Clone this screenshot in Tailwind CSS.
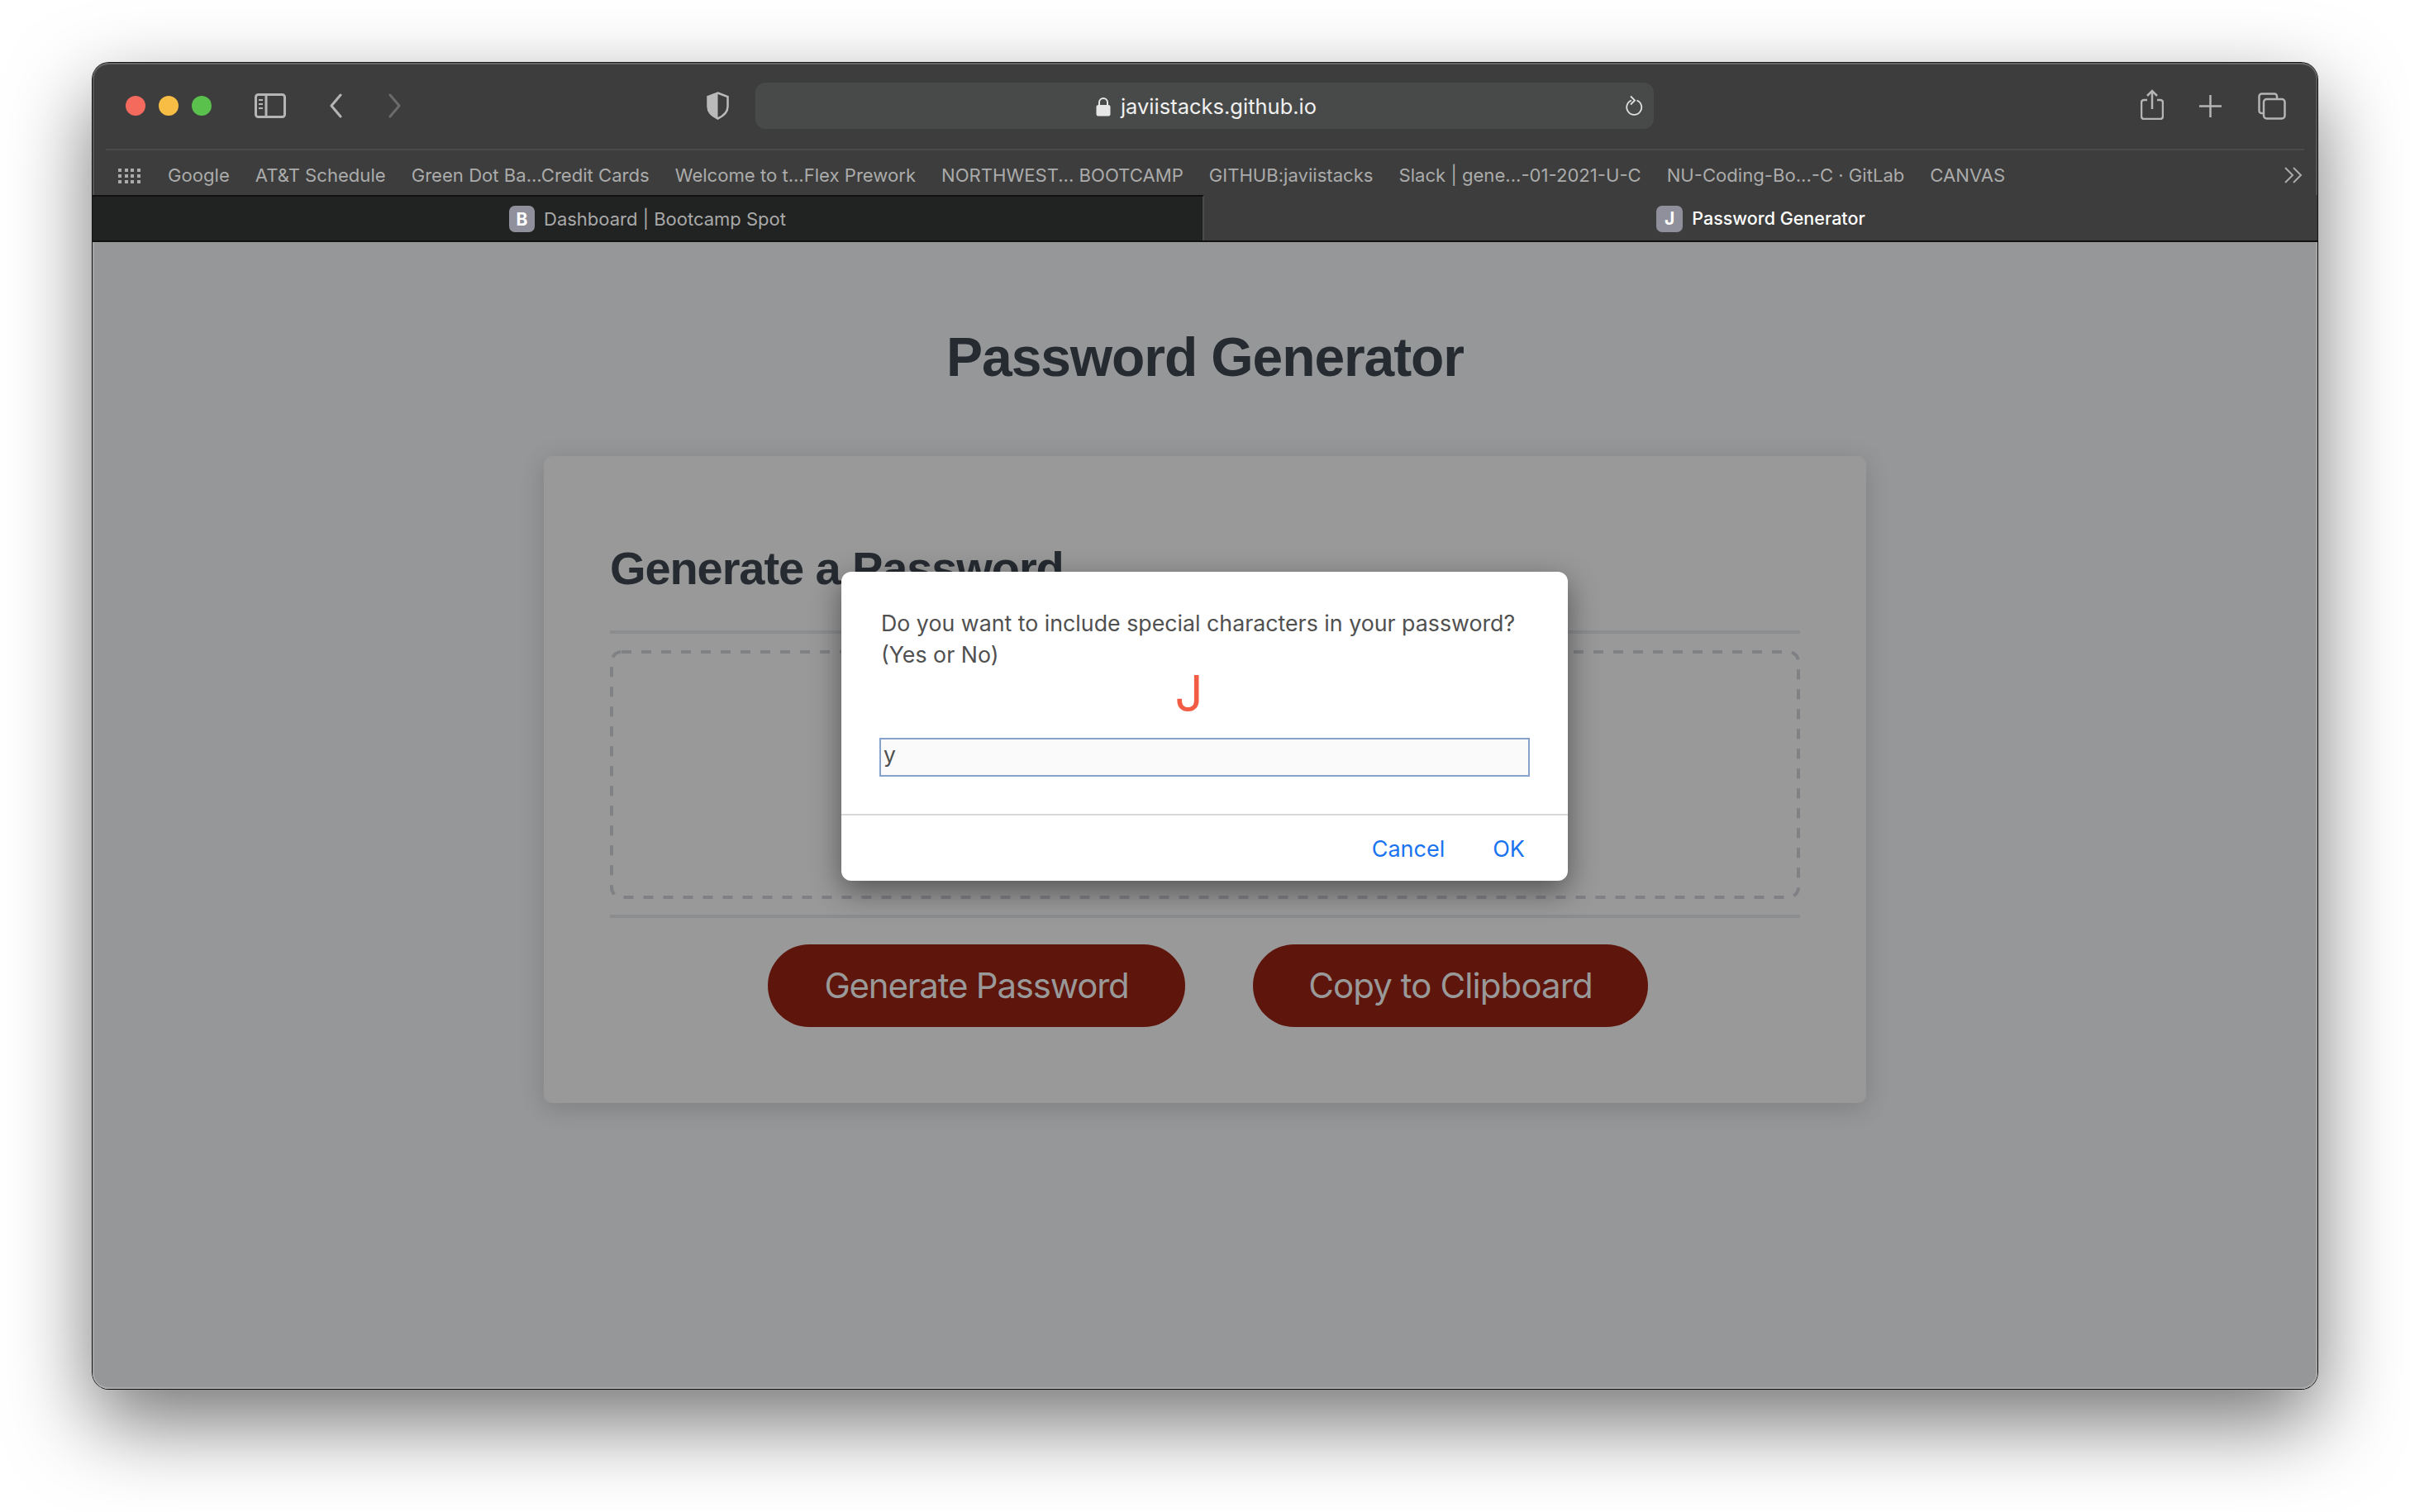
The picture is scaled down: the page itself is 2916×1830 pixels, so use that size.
<!DOCTYPE html>
<html lang="en">
<head>
  <meta charset="UTF-8">
  <title>Password Generator</title>
  <script src="https://cdn.jsdelivr.net/npm/@tailwindcss/browser@4"></script>
</head>
<body class="bg-white w-[2916px] h-[1830px] overflow-hidden pl-[112px] pt-[76px] font-['Inter',sans-serif]">

  <!-- Browser window -->
  <div class="relative w-[2692px] h-[1605px] rounded-[20px] overflow-visible flex flex-col shadow-[0_40px_100px_rgba(0,0,0,0.55),0_0_0_1px_#1a1a1a]">

    <!-- Toolbar -->
    <div class="h-[104px] shrink-0 flex items-center pl-[40px] bg-[#3c3d3c] rounded-t-[20px] shadow-[inset_0_2px_0_#666,inset_2px_0_0_#555,inset_-2px_0_0_#555]">
      <div class="flex gap-4">
        <span class="w-6 h-6 rounded-full bg-[#f46b5d]"></span>
        <span class="w-6 h-6 rounded-full bg-[#f7bd45]"></span>
        <span class="w-6 h-6 rounded-full bg-[#5ac24c]"></span>
      </div>
      <svg class="ml-[52px]" width="38" height="30" viewBox="0 0 38 30" fill="none" stroke="#b4b5b4" stroke-width="3">
        <rect x="1.5" y="1.5" width="35" height="27" rx="3"/>
        <path d="M14 2v26"/>
        <path d="M5 8h5M5 13h5M5 18h5" stroke-width="2"/>
      </svg>
      <svg class="ml-[52px]" width="16" height="30" viewBox="0 0 16 30" fill="none" stroke="#b4b5b4" stroke-width="3" stroke-linecap="round" stroke-linejoin="round">
        <path d="M14 2 3 15l11 13"/>
      </svg>
      <svg class="ml-[55px]" width="17" height="30" viewBox="0 0 17 30" fill="none" stroke="#6a6b6a" stroke-width="3" stroke-linecap="round" stroke-linejoin="round">
        <path d="M3 2l11 13L3 28"/>
      </svg>
      <svg class="ml-[369px]" width="27" height="34" viewBox="0 0 27 34">
        <path d="M13.5 1.5 25.5 6v12c0 7-5.500 11.500-12 14.500C7 29.500 1.500 25 1.500 18V6z" fill="none" stroke="#b9bab9" stroke-width="2.500"/>
        <path d="M13.500 1.500 1.500 6v12c0 7 5.500 11.500 12 14.500z" fill="#b9bab9"/>
      </svg>
      <!-- Address bar -->
      <div class="relative ml-8 w-[1087px] h-14 rounded-[12px] bg-[#484a49] flex items-center justify-center pt-[2px] pl-[4px] text-[#f0f0f0]">
        <svg class="mr-3" width="18" height="24" viewBox="0 0 18 24">
          <path d="M4 11V7a5 5 0 0 1 10 0v4" fill="none" stroke="#e6e6e6" stroke-width="2"/>
          <rect x="0.500" y="10" width="17" height="13.500" rx="2.500" fill="#e6e6e6"/>
        </svg>
        <span class="text-[25.5px] leading-none">javiistacks.github.io</span>
        <svg class="absolute right-[13px] top-[15px]" width="22" height="26" viewBox="0 0 22 26" fill="none" stroke="#e0e0e0" stroke-width="1.800">
          <path d="M8 6.500a9 9 0 1 0 6.500 0"/>
          <path d="M7 1.500l5 5-5 5"/>
        </svg>
      </div>
      <svg class="ml-[589px] -mt-[4px]" width="28" height="37" viewBox="0 0 28 37" fill="none" stroke="#b4b5b4" stroke-width="2.500">
        <path d="M8 13H4a3 3 0 0 0-3 3v17a3 3 0 0 0 3 3h20a3 3 0 0 0 3-3V16a3 3 0 0 0-3-3h-4"/>
        <path d="M14 24V2M8 8l6-6 6 6"/>
      </svg>
      <svg class="ml-[43px]" width="27" height="27" viewBox="0 0 27 27" stroke="#b4b5b4" stroke-width="2.500">
        <path d="M13.500 0v27M0 13.500h27"/>
      </svg>
      <svg class="ml-[44px]" width="34" height="33" viewBox="0 0 34 33" fill="none" stroke="#b4b5b4" stroke-width="2.500">
        <path d="M6 25H4.500a3 3 0 0 1-3-3V4.500a3 3 0 0 1 3-3H20a3 3 0 0 1 3 3V7"/>
        <rect x="7" y="8" width="25.500" height="23.500" rx="3.500"/>
      </svg>
    </div>

    <!-- Bookmarks -->
    <div class="h-[56px] shrink-0 bg-[#3c3d3c] shadow-[inset_2px_0_0_#555,inset_-2px_0_0_#555]">
      <div class="mx-[16px] h-0.5 bg-[#4a4b4a]"></div>
      <div class="relative flex items-center h-[54px] pt-[7px] pl-[31px] text-[#ababab] text-[22.1px] leading-none">
        <svg class="mr-[33px]" width="27" height="18" viewBox="0 0 27 18" fill="#ababab">
          <path d="M0 0h4v4H0zM8 0h4v4H8zM15 0h4v4h-4zM23 0h4v4h-4zM0 7h4v4H0zM8 7h4v4H8zM15 7h4v4h-4zM23 7h4v4h-4zM0 14h4v4H0zM8 14h4v4H8zM15 14h4v4h-4zM23 14h4v4h-4z"/>
        </svg>
        <div class="flex gap-[31px] whitespace-nowrap">
          <span>Google</span>
          <span>AT&amp;T Schedule</span>
          <span>Green Dot Ba...Credit Cards</span>
          <span>Welcome to t...Flex Prework</span>
          <span>NORTHWEST... BOOTCAMP</span>
          <span>GITHUB:javiistacks</span>
          <span>Slack | gene...-01-2021-U-C</span>
          <span>NU-Coding-Bo...-C · GitLab</span>
          <span>CANVAS</span>
        </div>
        <svg class="absolute right-[18px] top-[20px]" width="22" height="20" viewBox="0 0 22 20" fill="none" stroke="#ababab" stroke-width="2">
          <path d="M1 1l9 9-9 9M11 1l9 9-9 9"/>
        </svg>
      </div>
    </div>

    <!-- Tabs -->
    <div class="h-[57px] shrink-0 flex border-b-2 border-[#111] leading-none">
      <div class="w-[1345px] bg-[#212322] border-t-2 border-r-2 border-t-[#111] border-r-[#4a4b4a] flex items-center justify-center gap-[11px] pt-[1px] text-[22px] text-[#a9a9a9]">
        <span class="w-[31px] h-8 rounded-[7px] bg-[#8f909b] text-white text-[21px] font-bold flex items-center justify-center">B</span>
        <span>Dashboard | Bootcamp Spot</span>
      </div>
      <div class="flex-1 bg-[#3c3d3c] flex items-center justify-center gap-[11px] pt-[2px] text-[21.5px] text-white font-medium">
        <span class="w-[32px] h-8 rounded-[7px] bg-[#8f909b] text-white text-[21px] font-bold flex items-center justify-center">J</span>
        <span>Password Generator</span>
      </div>
    </div>

    <!-- Page -->
    <div class="flex-1 bg-[#969799] rounded-b-[20px] flex flex-col items-center pt-[105px] font-['Liberation_Sans',sans-serif] shadow-[inset_0_-2px_0_#aaa,inset_2px_0_0_#a5a5a5,inset_-2px_0_0_#a5a5a5]">
      <h1 class="text-[66px] h-[68px] leading-[68px] tracking-[-1.1px] font-bold text-[#252b31]">Password Generator</h1>

      <div class="mt-[86px] w-[1600px] h-[783px] rounded-[10px] bg-[#999999] px-[80px] shadow-[0_6px_30px_rgba(0,0,0,0.16)]">
        <h2 class="pt-[108px] text-[56px] leading-none tracking-[-1.1px] font-bold text-[#252b31]">Generate a Password</h2>
        <div class="mt-[47px] h-1 bg-[#8c8d8f]"></div>
        <div class="mt-[20px] h-[301px]">
          <svg width="1440" height="301" viewBox="0 0 1440 301" fill="none" stroke="#7f8185" stroke-width="4" stroke-dasharray="12 12">
            <rect x="2" y="2" width="1436" height="297" rx="12"/>
          </svg>
        </div>
        <div class="mt-[19px] h-1 bg-[#8c8d8f]"></div>
        <div class="mt-8 pl-[7px] flex justify-center gap-[82px] text-[#999999] text-[42px] leading-none font-['Inter',sans-serif]">
          <button class="w-[505px] h-[100px] rounded-[50px] bg-[#5e150b] tracking-[-1.2px]">Generate Password</button>
          <button class="w-[478px] h-[100px] rounded-[50px] bg-[#5e150b] tracking-[-0.9px]">Copy to Clipboard</button>
        </div>
      </div>
    </div>

    <!-- Prompt dialog -->
    <div class="absolute left-[906px] top-[616px] w-[879px] h-[374px] rounded-[12px] bg-white flex flex-col shadow-[0_12px_36px_rgba(0,0,0,0.45)] font-['Inter',sans-serif]">
      <div class="h-[295px] shrink-0 px-[46px] pt-[43px] border-b-2 border-[#d9d9d9]">
        <p class="pl-[2px] whitespace-nowrap text-[26.75px] leading-[38px] text-[#505050]">Do you want to include special characters in your password?<br>(Yes or No)</p>
        <div class="-mt-[8px] text-center pr-[38px] text-[60px] leading-[72px] text-[#f25c45]">J</div>
        <div class="mt-[18px] h-[47px] border-2 border-[#85a2cd] bg-[#fafafa] flex items-center pl-[3px] pb-[5px] text-[26.5px] text-[#505050]">y</div>
      </div>
      <div class="flex-1 flex items-center justify-end pt-[3px] pr-[52px] gap-[58px] text-[27px] text-[#1a73f0]">
        <span>Cancel</span>
        <span>OK</span>
      </div>
    </div>
  </div>

</body>
</html>
